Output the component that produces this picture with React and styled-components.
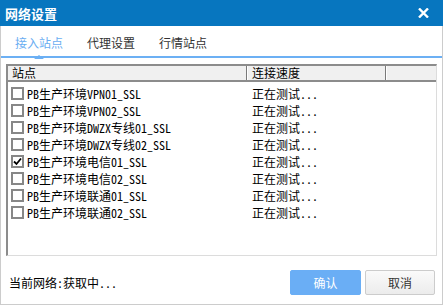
import React, { useState } from "react"
import styled, { createGlobalStyle } from "styled-components"

const Global = createGlobalStyle`
  html, body {
    margin: 0;
    padding: 0;
    background: #ffffff;
  }
  body {
    font-family: "Noto Sans CJK SC", "Liberation Sans", sans-serif;
    font-size: 12px;
    color: #000;
  }
`

const mono = `"Noto Sans Mono CJK SC", "Liberation Mono", monospace`

const Window = styled.div`
  width: 443px;
  height: 305px;
  display: flex;
  flex-direction: column;
  box-sizing: border-box;
  background: #fff;
`

const TitleBar = styled.div`
  height: 26px;
  flex: none;
  background: #0776bf;
  display: flex;
  align-items: center;
  justify-content: space-between;
  padding: 0 14px 0 5px;
`

const Title = styled.div`
  color: #fff;
  font-size: 13px;
  font-weight: bold;
`

const CloseBtn = styled.button`
  border: 0;
  background: none;
  padding: 0;
  width: 12px;
  height: 12px;
  display: flex;
  align-items: center;
  justify-content: center;
  cursor: pointer;
`

const Body = styled.div`
  flex: 1;
  display: flex;
  flex-direction: column;
  border: 1px solid #cccccc;
  border-top: 0;
  min-height: 0;
`

const TabBar = styled.div`
  height: 30px;
  display: flex;
  align-items: center;
  gap: 24px;
  padding-left: 14px;
  border-bottom: 2px solid #6cb0f4;
`

const Tab = styled.div`
  position: relative;
  font-size: 12px;
  line-height: 16px;
  padding-top: 4px;
  color: ${(p) => (p.$active ? "#6aaef2" : "#333")};
  cursor: pointer;

  &::after {
    content: "";
    display: ${(p) => (p.$active ? "block" : "none")};
    position: absolute;
    left: 50%;
    bottom: -8px;
    margin-left: -5px;
    border-left: 5px solid transparent;
    border-right: 5px solid transparent;
    border-bottom: 4px solid #6cb0f4;
  }
`

const Content = styled.div`
  flex: 1;
  display: flex;
  flex-direction: column;
  padding: 6px 5px 0 5px;
  min-height: 0;
`

const ListBox = styled.div`
  height: 192px;
  box-sizing: border-box;
  border-top: 2px solid #8c8c8c;
  border-left: 2px solid #8c8c8c;
  border-right: 1px solid #dcdcdc;
  border-bottom: 1px solid #dcdcdc;
  display: flex;
  flex-direction: column;
`

const Header = styled.div`
  height: 14px;
  display: flex;
  background: #f0f0f0;
  border-bottom: 2px solid #8c8c8c;
`

const HeadCell = styled.div`
  width: ${(p) => p.$w}px;
  flex: ${(p) => (p.$w ? "none" : "1")};
  box-sizing: border-box;
  display: flex;
  align-items: center;
  padding-left: ${(p) => p.$pl || 0}px;
  border-right: ${(p) => (p.$sep ? "1px solid #7a7a7a" : "0")};
  box-shadow: ${(p) => (p.$sep ? "1px 0 0 #ffffff" : "none")};
  font-size: 12px;
  line-height: 14px;
  white-space: nowrap;
`

const Rows = styled.div`
  padding-top: 3px;
  display: flex;
  flex-direction: column;
`

const Row = styled.div`
  height: 17px;
  display: flex;
  align-items: center;
`

const NameCell = styled.label`
  width: 239px;
  flex: none;
  display: flex;
  align-items: center;
  padding-left: 3px;
  box-sizing: border-box;
  cursor: pointer;
`

const Check = styled.span`
  width: 13px;
  height: 13px;
  box-sizing: border-box;
  border: 2px solid #878787;
  background: #fff;
  display: flex;
  align-items: center;
  justify-content: center;
  margin-right: 3px;
  flex: none;
`

const Name = styled.span`
  font-family: ${mono};
  font-size: 12px;
  line-height: 17px;
  white-space: nowrap;
`

const Speed = styled.div`
  font-family: ${mono};
  padding-left: 5px;
  line-height: 17px;
  white-space: nowrap;
`

const Footer = styled.div`
  flex: 1;
  display: flex;
  align-items: center;
  justify-content: space-between;
  padding: 5px 2px 0 3px;
`

const Status = styled.div`
  font-family: ${mono};
  font-size: 12px;
`

const Buttons = styled.div`
  display: flex;
  gap: 4px;
`

const Button = styled.button`
  width: ${(p) => (p.$primary ? 71 : 70)}px;
  height: 25px;
  box-sizing: border-box;
  border-radius: 2px;
  font-family: "Noto Sans CJK SC", "Liberation Sans", sans-serif;
  font-size: 12px;
  cursor: pointer;
  border: 1px solid ${(p) => (p.$primary ? "#6aaef5" : "#cccccc")};
  background: ${(p) =>
    p.$primary ? "#6aaef5" : "linear-gradient(#fafafa, #ececec)"};
  color: ${(p) => (p.$primary ? "#fff" : "#333")};
`

const sites = [
  "PB生产环境VPN01_SSL",
  "PB生产环境VPN02_SSL",
  "PB生产环境DWZX专线01_SSL",
  "PB生产环境DWZX专线02_SSL",
  "PB生产环境电信01_SSL",
  "PB生产环境电信02_SSL",
  "PB生产环境联通01_SSL",
  "PB生产环境联通02_SSL",
]

const tabs = ["接入站点", "代理设置", "行情站点"]

export default function App() {
  const [tab, setTab] = useState(0)
  const [checked, setChecked] = useState(4)

  return (
    <>
      <Global />
      <Window>
        <TitleBar>
          <Title>网络设置</Title>
          <CloseBtn aria-label="关闭">
            <svg width="11" height="10" viewBox="0 0 11 10">
              <path d="M1 0.5 L10 9.5 M10 0.5 L1 9.5" stroke="#fff" strokeWidth="2.4" />
            </svg>
          </CloseBtn>
        </TitleBar>
        <Body>
          <TabBar>
            {tabs.map((t, i) => (
              <Tab key={t} $active={i === tab} onClick={() => setTab(i)}>
                {t}
              </Tab>
            ))}
          </TabBar>
          <Content>
            <ListBox>
              <Header>
                <HeadCell $w={239} $pl={4} $sep>站点</HeadCell>
                <HeadCell $w={139} $pl={5} $sep>连接速度</HeadCell>
                <HeadCell />
              </Header>
              <Rows>
                {sites.map((s, i) => (
                  <Row key={s}>
                    <NameCell onClick={() => setChecked(i)}>
                      <Check>
                        {checked === i && (
                          <svg width="9" height="9" viewBox="0 0 9 9">
                            <path d="M1 4.5 L3.5 7 L8 1.5" fill="none" stroke="#000" strokeWidth="1.8" />
                          </svg>
                        )}
                      </Check>
                      <Name>{s}</Name>
                    </NameCell>
                    <Speed>正在测试...</Speed>
                  </Row>
                ))}
              </Rows>
            </ListBox>
            <Footer>
              <Status>当前网络:获取中...</Status>
              <Buttons>
                <Button $primary>确认</Button>
                <Button>取消</Button>
              </Buttons>
            </Footer>
          </Content>
        </Body>
      </Window>
    </>
  )
}
